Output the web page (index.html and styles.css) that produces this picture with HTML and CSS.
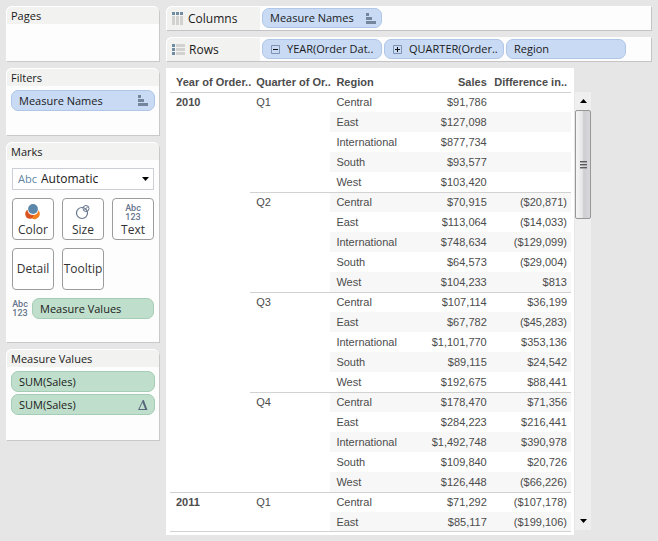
FILE: index.html
```html
<!DOCTYPE html>
<html lang="en">
<head>
<meta charset="utf-8">
<title>Worksheet</title>
<link rel="stylesheet" href="styles.css">
</head>
<body>
<div class="workspace">
  <aside class="cards">
    <section class="card card-pages">
      <h2>Pages</h2>
    </section>
    <section class="card card-filters">
      <h2>Filters</h2>
      <div class="card-body">
        <button class="pill blue"><span>Measure Names</span>
          <svg class="sort" width="10" height="11" viewBox="0 0 10 11"><path d="M0 0h3v3H0zM0 4h6v3H0zM0 8h10v3H0z"/></svg>
        </button>
      </div>
    </section>
    <section class="card card-marks">
      <h2>Marks</h2>
      <div class="marks-body">
        <div class="mark-type">
          <label for="mark">Abc</label>
          <select id="mark"><option>Automatic</option></select>
          <svg width="7" height="4" viewBox="0 0 7 4"><path d="M0 0h7L3.5 4z"/></svg>
        </div>
        <div class="mark-grid">
          <button class="mark">
            <svg width="16" height="16" viewBox="0 0 16 16"><circle cx="5" cy="10" r="4.8" fill="#d9541e"/><path fill="#f58020" d="M7 14.500a5 5 0 1 0 5-9.300z"/><circle cx="8" cy="5.500" r="5.500" fill="#fff"/><circle cx="8" cy="5" r="4.900" fill="#5b87ab"/></svg>
            <span>Color</span>
          </button>
          <button class="mark">
            <svg width="16" height="16" viewBox="0 0 16 16" fill="none" stroke="#66758c"><circle cx="7" cy="9" r="5.500" stroke-width="1.200"/><circle cx="11" cy="4.500" r="3"/><path d="M9 6.500l4-4"/></svg>
            <span>Size</span>
          </button>
          <button class="mark">
            <span class="abc">Abc<br>123</span>
            <span>Text</span>
          </button>
          <button class="mark plain">Detail</button>
          <button class="mark plain">Tooltip</button>
        </div>
        <div class="encoding">
          <span class="abc">Abc<br>123</span>
          <button class="pill green"><span>Measure Values</span></button>
        </div>
      </div>
    </section>
    <section class="card card-values">
      <h2>Measure Values</h2>
      <div class="card-body">
        <button class="pill green"><span>SUM(Sales)</span></button>
        <button class="pill green"><span>SUM(Sales)</span>
          <svg class="delta" width="10" height="10" viewBox="0 0 10 10"><path fill-rule="evenodd" d="M4.800 0h1L9.500 10H0zM4.500 2.500L1.500 9h5.600z"/></svg>
        </button>
      </div>
    </section>
  </aside>
  <main>
    <section class="shelf">
      <h2>
        <svg width="12" height="14" viewBox="0 0 12 14"><path fill="#6f8ca3" d="M0 0h3v3H0zM4 0h3v3H4zM8 0h3v3H8z"/><path fill="#d2d2d0" d="M0 4h3v9H0zM4 4h3v9H4zM8 4h3v9H8z"/></svg>
        Columns
      </h2>
      <div class="pills">
        <button class="pill blue"><span>Measure Names</span>
          <svg class="sort" width="10" height="11" viewBox="0 0 10 11"><path d="M0 0h3v3H0zM0 4h6v3H0zM0 8h10v3H0z"/></svg>
        </button>
      </div>
    </section>
    <section class="shelf">
      <h2>
        <svg width="13" height="12" viewBox="0 0 13 12"><path fill="#6f8ca3" d="M0 0h3v3H0zM0 4h3v3H0zM0 8h3v3H0z"/><path fill="#d2d2d0" d="M4 0h9v3H4zM4 4h9v3H4zM4 8h9v3H4z"/></svg>
        Rows
      </h2>
      <div class="pills">
        <button class="pill blue">
          <svg class="toggle" width="9" height="9" viewBox="0 0 9 9"><path class="frame" d="M.5.5h8v8h-8z"/><path class="sign" d="M2 4.500h5"/></svg>
          <span>YEAR(Order Dat..</span>
        </button>
        <button class="pill blue">
          <svg class="toggle" width="9" height="9" viewBox="0 0 9 9"><path class="frame" d="M.5.5h8v8h-8z"/><path class="sign" d="M2 4.500h5M4.500 2v5"/></svg>
          <span>QUARTER(Order..</span>
        </button>
        <button class="pill blue"><span>Region</span></button>
      </div>
    </section>
    <div class="view">
      <div class="sheet">
        <table>
          <thead>
            <tr><th>Year of Order..</th><th>Quarter of Or..</th><th>Region</th><th class="num">Sales</th><th class="num">Difference in..</th></tr>
          </thead>
          <tbody>
            <tr class="rule"><th rowspan="20">2010</th><td rowspan="5">Q1</td><td class="d">Central</td><td class="d num">$91,786</td><td class="d num"></td></tr>
            <tr><td class="d">East</td><td class="d num">$127,098</td><td class="d num"></td></tr>
            <tr><td class="d">International</td><td class="d num">$877,734</td><td class="d num"></td></tr>
            <tr><td class="d">South</td><td class="d num">$93,577</td><td class="d num"></td></tr>
            <tr><td class="d">West</td><td class="d num">$103,420</td><td class="d num"></td></tr>
            <tr class="rule"><td rowspan="5">Q2</td><td class="d">Central</td><td class="d num">$70,915</td><td class="d num">($20,871)</td></tr>
            <tr><td class="d">East</td><td class="d num">$113,064</td><td class="d num">($14,033)</td></tr>
            <tr><td class="d">International</td><td class="d num">$748,634</td><td class="d num">($129,099)</td></tr>
            <tr><td class="d">South</td><td class="d num">$64,573</td><td class="d num">($29,004)</td></tr>
            <tr><td class="d">West</td><td class="d num">$104,233</td><td class="d num">$813</td></tr>
            <tr class="rule"><td rowspan="5">Q3</td><td class="d">Central</td><td class="d num">$107,114</td><td class="d num">$36,199</td></tr>
            <tr><td class="d">East</td><td class="d num">$67,782</td><td class="d num">($45,283)</td></tr>
            <tr><td class="d">International</td><td class="d num">$1,101,770</td><td class="d num">$353,136</td></tr>
            <tr><td class="d">South</td><td class="d num">$89,115</td><td class="d num">$24,542</td></tr>
            <tr><td class="d">West</td><td class="d num">$192,675</td><td class="d num">$88,441</td></tr>
            <tr class="rule"><td rowspan="5">Q4</td><td class="d">Central</td><td class="d num">$178,470</td><td class="d num">$71,356</td></tr>
            <tr><td class="d">East</td><td class="d num">$284,223</td><td class="d num">$216,441</td></tr>
            <tr><td class="d">International</td><td class="d num">$1,492,748</td><td class="d num">$390,978</td></tr>
            <tr><td class="d">South</td><td class="d num">$109,840</td><td class="d num">$20,726</td></tr>
            <tr><td class="d">West</td><td class="d num">$126,448</td><td class="d num">($66,226)</td></tr>
            <tr class="rule"><th rowspan="2">2011</th><td rowspan="2">Q1</td><td class="d">Central</td><td class="d num">$71,292</td><td class="d num">($107,178)</td></tr>
            <tr><td class="d">East</td><td class="d num">$85,117</td><td class="d num">($199,106)</td></tr>
          </tbody>
        </table>
      </div>
      <div class="scrollbar">
        <button aria-label="Scroll up"><svg width="7" height="4" viewBox="0 0 7 4"><path d="M0 4h7L3.500 0z"/></svg></button>
        <div class="thumb"><i></i><i></i><i></i></div>
        <button class="down" aria-label="Scroll down"><svg width="7" height="4" viewBox="0 0 7 4"><path d="M0 0h7L3.500 4z"/></svg></button>
      </div>
    </div>
  </main>
</div>
</body>
</html>
```

FILE: styles.css
```css
* { box-sizing: border-box; }

body {
  margin: 0;
  background: #e6e6e6;
  color: #1a1a1a;
  font: 12px/16px "Open Sans", "Noto Sans", sans-serif;
}

h2 { margin: 0; font-size: 12px; font-weight: 400; }

button, select {
  margin: 0;
  padding: 0;
  color: inherit;
  font: inherit;
}

svg { display: block; flex: none; }

.workspace {
  display: grid;
  grid-template-columns: 153px minmax(0, 1fr);
  gap: 7px;
  padding: 6px 7px 6px 6px;
  align-items: start;
}

.cards, main {
  display: flex;
  flex-direction: column;
  gap: 7px;
}

.card {
  background: #fdfdfd;
  border-radius: 6px 6px 0 0;
  box-shadow: 1px 1px 0 #c9c9c9;
}

.card h2 {
  height: 18px;
  padding: 1px 4px;
  background: #f2f2f0;
  border-top: 1px solid #fff;
  border-left: 1px solid #fff;
  border-radius: 6px 6px 0 0;
  font-size: 11px;
}

.card-pages { min-height: 55px; }
.card-filters { min-height: 67px; }
.card-marks { min-height: 200px; }
.card-values { min-height: 91px; }

.card-body {
  display: flex;
  flex-direction: column;
  gap: 2px;
  padding: 4px 4px 0 5px;
}

.pill {
  display: flex;
  align-items: center;
  height: 21px;
  padding: 0 6px 0 7px;
  border: 1px solid;
  border-radius: 7px;
  font-size: 11px;
  text-align: left;
  white-space: nowrap;
}

.pill span { flex: 1; }
.blue { background: #c9daf5; border-color: #afc6e6; }
.green { background: #bfdfcc; border-color: #a5ccb4; }
.sort { fill: #74859c; }
.delta { fill: #56677c; }
.toggle { margin: 0 7px 0 1px; fill: none; }
.toggle .frame { stroke: #7f93b2; }
.toggle .sign { stroke: #111; }

.marks-body { padding: 8px 5px 0 6px; }

.mark-type {
  display: flex;
  align-items: center;
  height: 22px;
  margin-bottom: 8px;
  padding: 0 4px 0 5px;
  background: #fff;
  border: 1px solid #ccced8;
}

.mark-type label { color: #5f86a3; font-size: 11px; }

.mark-type select {
  flex: 1;
  min-width: 0;
  margin-left: 4px;
  appearance: none;
  background: none;
  border: 0;
}

.mark-grid {
  display: grid;
  grid-template-columns: repeat(3, 42px);
  gap: 8px;
  margin-bottom: 8px;
}

.mark {
  display: flex;
  flex-direction: column;
  align-items: center;
  justify-content: space-between;
  height: 42px;
  padding: 5px 0 1px;
  background: #fff;
  border: 1px solid #9c9c9c;
  border-radius: 4px;
  color: #333;
  white-space: nowrap;
}

.plain { justify-content: center; padding: 0; }

.abc {
  color: #66758c;
  font: 500 9px/9px Roboto, sans-serif;
  text-align: center;
}

.encoding { display: flex; align-items: center; gap: 4px; }
.encoding .abc { width: 16px; }
.encoding .pill { flex: 1; }

.shelf {
  display: flex;
  height: 24px;
  background: #fdfdfd;
  border-radius: 6px 0 0 0;
  box-shadow: 1px 1px 0 #c4c4c4;
}

.shelf h2 {
  display: flex;
  align-items: center;
  gap: 4px;
  width: 94px;
  padding-left: 5px;
  background: #f2f2f0;
  border-top: 1px solid #fff;
  border-left: 1px solid #fff;
  border-radius: 6px 0 0 0;
}

.pills { display: flex; gap: 2px; padding: 2px; }
.pills .pill { width: 120px; height: 20px; padding-right: 5px; }

.view { display: flex; align-items: flex-start; gap: 1px; }

.sheet { padding: 0 3px 3px 4px; background: #fff; }

table {
  width: 401px;
  table-layout: fixed;
  border-spacing: 0;
  border-bottom: 1px solid #d2d2d2;
  color: #4c4c4c;
  font: 11px/14px "Liberation Sans", Arial, sans-serif;
}

th, td {
  height: 20px;
  padding: 3px 0 3px 6px;
  text-align: left;
  vertical-align: top;
  white-space: nowrap;
}

thead th { height: 24px; padding-top: 7px; }
.num { padding-right: 4px; padding-left: 0; text-align: right; }
.rule > * { padding-top: 2px; border-top: 1px solid #d2d2d2; }
tbody tr:nth-child(even) .d { background: #f7f7f7; }
tbody tr:last-child td { height: 19px; padding-bottom: 2px; }

.scrollbar {
  display: flex;
  flex-direction: column;
  align-self: stretch;
  width: 16px;
  margin: 24px 0 5px;
  background: #efefef;
}

.scrollbar button {
  display: flex;
  align-items: center;
  justify-content: center;
  height: 18px;
  background: none;
  border: 0;
}

.scrollbar .down { margin-top: auto; }

.thumb {
  display: flex;
  flex-direction: column;
  align-items: center;
  justify-content: center;
  gap: 1px;
  height: 109px;
  border: 1px solid #979797;
  border-radius: 2px;
  background: linear-gradient(90deg, #f6f6f6, #e6e6e8 45%, #cdcdd2 55%, #d8d8dc);
}

.thumb i { width: 7px; height: 2px; background: #5a5a5e; border-bottom: 1px solid #a8a8ac; }
```
